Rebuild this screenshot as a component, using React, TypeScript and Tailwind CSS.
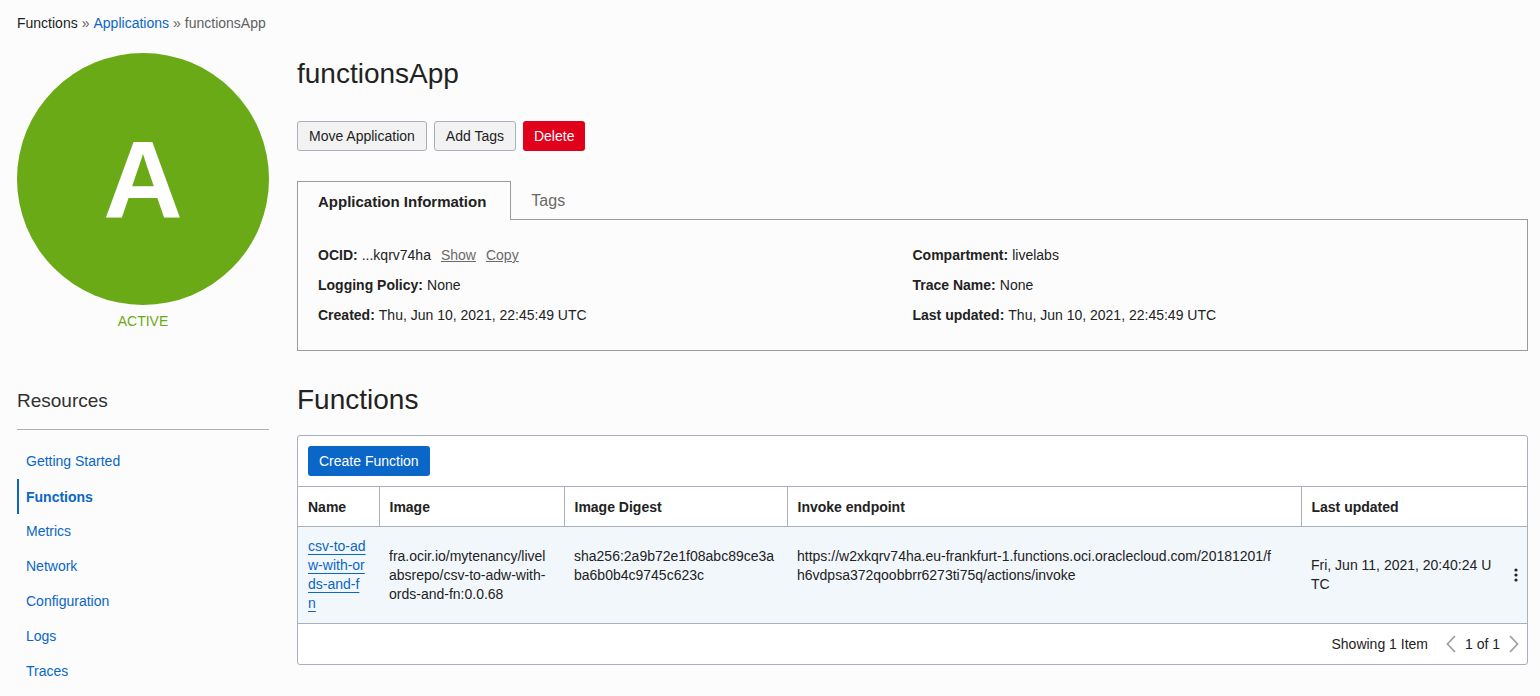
import type { ReactNode } from "react";

const resources = ["Getting Started", "Functions", "Metrics", "Network", "Configuration", "Logs", "Traces"];

const columns = ["Name", "Image", "Image Digest", "Invoke endpoint"];

function Field({ label, children }: { label: string; children: ReactNode }) {
  return (
    <div className="flex gap-1">
      <dt className="font-bold">{label}:</dt>
      <dd>{children}</dd>
    </div>
  );
}

function Sidebar() {
  return (
    <aside className="w-[252px] shrink-0">
      <div className="flex aspect-square items-center justify-center rounded-full bg-[#6aaa17] text-[110px] leading-none font-bold text-white">
        A
      </div>
      <p className="pt-1.5 text-center leading-5 text-[#6aaa17]">ACTIVE</p>
      <h2 className="mt-14 border-b border-[#aeb0b5] pb-3.5 text-[19px] font-light leading-7 text-[#303030]">Resources</h2>
      <nav aria-label="Resources" className="mt-3.5 flex flex-col">
        {resources.map((item) => (
          <a
            key={item}
            href="#"
            className={
              item === "Functions"
                ? "flex h-[35px] items-center border-l-2 border-[#0a66c7] pl-[7px] font-bold text-[#0a66c7]"
                : "flex h-[35px] items-center border-l-2 border-transparent pb-0.5 pl-[7px] text-[#0a66c7]"
            }
          >
            {item}
          </a>
        ))}
      </nav>
    </aside>
  );
}

function ApplicationInfo() {
  return (
    <section className="mt-[30px]">
      <div className="flex" role="tablist">
        <button
          role="tab"
          aria-selected="true"
          className="relative z-10 h-[39px] border border-b-0 border-[#9b9b9b] bg-[#fcfcfc] pt-0.5 pr-6 pl-5 text-[15px] font-bold"
        >
          Application Information
        </button>
        <button role="tab" aria-selected="false" className="h-[39px] px-5 text-base text-[#6b6966]">
          Tags
        </button>
      </div>
      <div className="-mt-px grid grid-cols-2 border border-[#9b9b9b] px-5 pt-[25px] pb-[25px]">
        <dl className="flex flex-col gap-2.5 leading-5">
          <Field label="OCID">
            ...kqrv74ha
            <a href="#" className="ml-2.5 text-[#6b6966] underline">Show</a>
            <a href="#" className="ml-2.5 text-[#6b6966] underline">Copy</a>
          </Field>
          <Field label="Logging Policy">None</Field>
          <Field label="Created">Thu, Jun 10, 2021, 22:45:49 UTC</Field>
        </dl>
        <dl className="flex flex-col gap-2.5 leading-5">
          <Field label="Compartment">livelabs</Field>
          <Field label="Trace Name">None</Field>
          <Field label="Last updated">Thu, Jun 10, 2021, 22:45:49 UTC</Field>
        </dl>
      </div>
    </section>
  );
}

function FunctionsTable() {
  return (
    <div className="mt-3.5 rounded-[3px] border border-[#a9afbc] bg-white">
      <div className="p-2.5">
        <button className="block h-[30px] rounded-[3px] bg-[#0a66c7] px-[11px] text-white">Create Function</button>
      </div>
      <table className="w-full table-fixed border-collapse text-left">
        <colgroup>
          <col className="w-[81px]" />
          <col className="w-[185px]" />
          <col className="w-[223px]" />
          <col />
          <col className="w-[204px]" />
          <col className="w-[22px]" />
        </colgroup>
        <thead>
          <tr className="h-10 border-y border-[#a9afbc]">
            {columns.map((name) => (
              <th key={name} className="border-r border-[#a9afbc] px-2.5 font-bold">{name}</th>
            ))}
            <th colSpan={2} className="px-2.5 font-bold">Last updated</th>
          </tr>
        </thead>
        <tbody>
          <tr className="border-b border-[#a9afbc] bg-[#f2f7fc] leading-[19px] break-all">
            <td className="py-2.5 pl-2.5">
              <a href="#" className="text-[#0a66c7] underline underline-offset-3">
                csv-to-ad<br />w-with-or<br />ds-and-f<br />n
              </a>
            </td>
            <td className="pr-3 pl-2.5">fra.ocir.io/mytenancy/livelabsrepo/csv-to-adw-with-ords-and-fn:0.0.68</td>
            <td className="px-2.5 pt-5 align-top">sha256:2a9b72e1f08abc89ce3aba6b0b4c9745c623c</td>
            <td className="pt-5 pr-6 pl-2.5 align-top">
              https://w2xkqrv74ha.eu-frankfurt-1.functions.oci.oraclecloud.com/20181201/fh6vdpsa372qoobbrr6273ti75q/actions/invoke
            </td>
            <td className="px-2.5">Fri, Jun 11, 2021, 20:40:24 UTC</td>
            <td>
              <button aria-label="Actions" className="flex w-full justify-center">
                <svg width="4" height="14" viewBox="0 0 4 14" fill="#222">
                  <circle cx="2" cy="2" r="1.6" />
                  <circle cx="2" cy="7" r="1.6" />
                  <circle cx="2" cy="12" r="1.6" />
                </svg>
              </button>
            </td>
          </tr>
        </tbody>
      </table>
      <div className="flex h-10 items-center justify-end pr-2">
        <span className="mr-[18px]">Showing 1 Item</span>
        <button aria-label="Previous page">
          <svg width="10" height="18" viewBox="0 0 10 18" fill="none" stroke="#a0a0a0" strokeWidth="1.8">
            <path d="M9 1 1.5 9 9 17" />
          </svg>
        </button>
        <span className="mx-[9px]">1 of 1</span>
        <button aria-label="Next page">
          <svg width="10" height="18" viewBox="0 0 10 18" fill="none" stroke="#a0a0a0" strokeWidth="1.8">
            <path d="M1 1 8.5 9 1 17" />
          </svg>
        </button>
      </div>
    </div>
  );
}

export default function App() {
  return (
    <div className="min-h-screen bg-[#fcfcfc] pt-[13px] pr-3 pl-[17px] font-['Liberation_Sans',Arial,sans-serif] text-sm text-[#222]">
      <nav aria-label="Breadcrumb" className="flex gap-1 leading-5 text-[#5f5f5f]">
        <span className="text-[#222]">Functions</span>
        <span>»</span>
        <a href="#" className="text-[#0a66c7]">Applications</a>
        <span>»</span>
        <span>functionsApp</span>
      </nav>
      <div className="mt-5 flex gap-7">
        <Sidebar />
        <main className="min-w-0 flex-1">
          <h1 className="text-[28px] leading-[42px]">functionsApp</h1>
          <div className="mt-[26px] flex gap-[7px]">
            <button className="h-[30px] rounded-[3px] border border-[#a9afbc] bg-[#f2f2f2] px-[11px]">Move Application</button>
            <button className="h-[30px] rounded-[3px] border border-[#a9afbc] bg-[#f2f2f2] px-[11px]">Add Tags</button>
            <button className="h-[30px] rounded-[3px] bg-[#e0001b] px-[11px] text-white">Delete</button>
          </div>
          <ApplicationInfo />
          <h2 className="mt-7 text-[28px] leading-[42px]">Functions</h2>
          <FunctionsTable />
        </main>
      </div>
    </div>
  );
}
